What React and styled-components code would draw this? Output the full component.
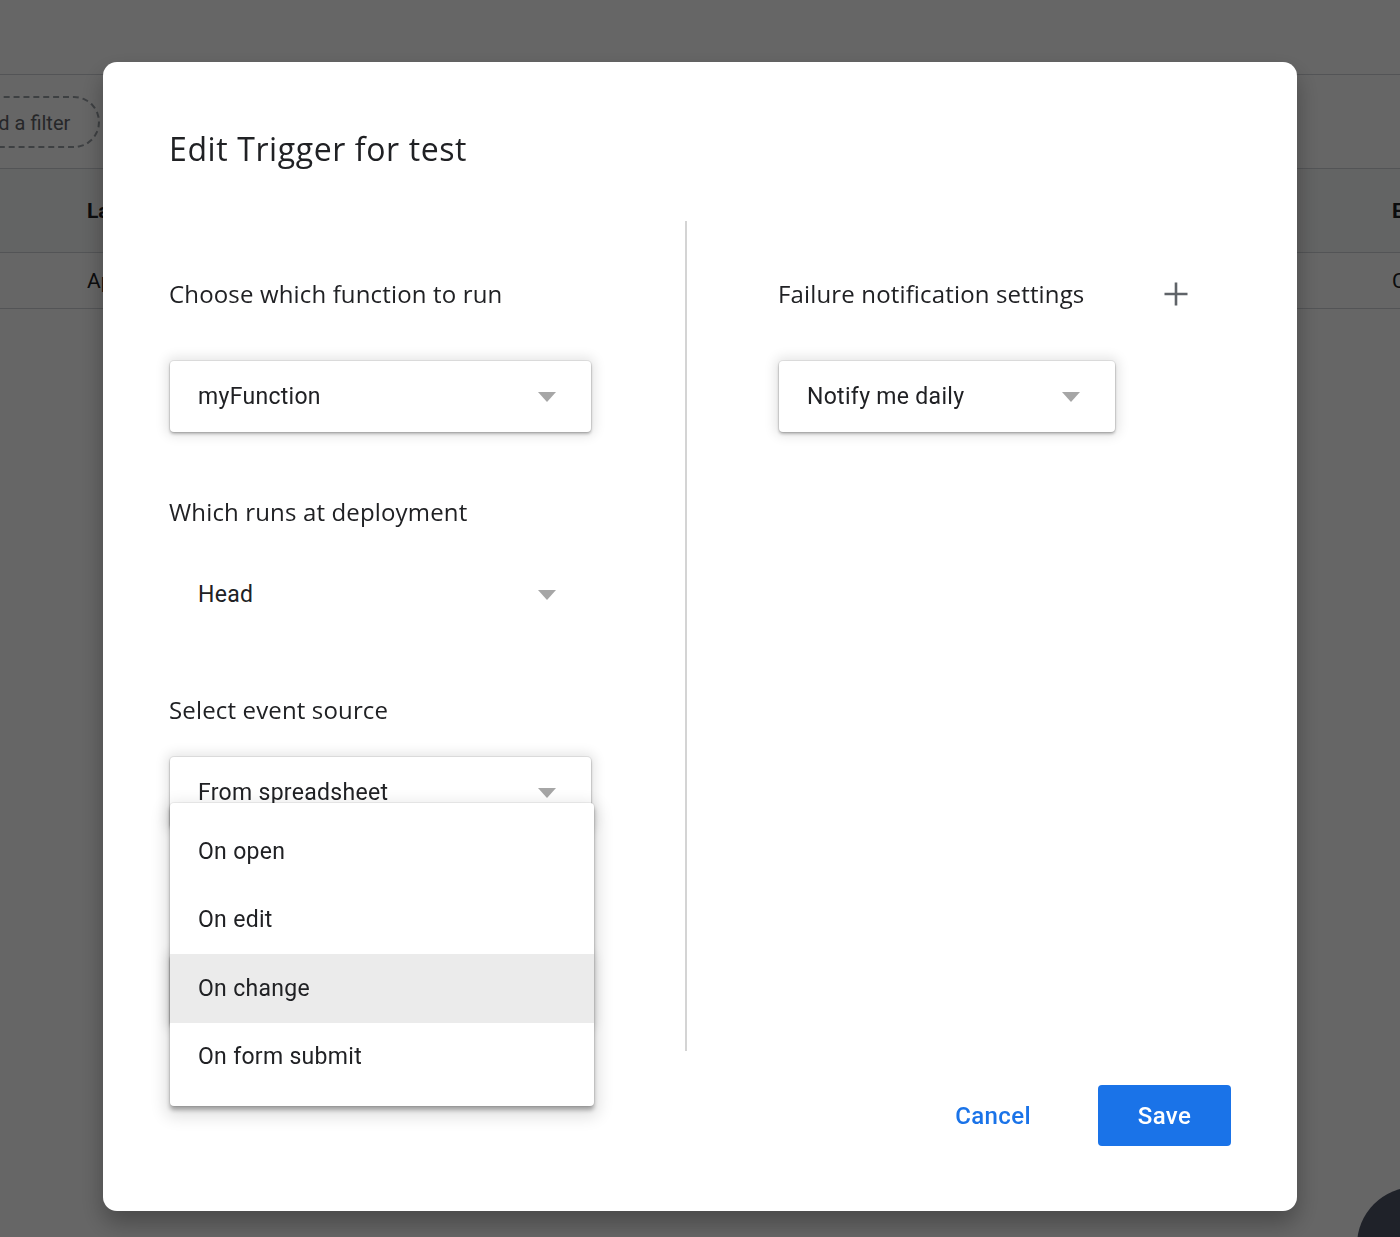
import React from "react";
import styled, { createGlobalStyle } from "styled-components";

const HEAD_FONT = `"Open Sans", Roboto, "Liberation Sans", sans-serif`;

const GlobalStyle = createGlobalStyle`
  html, body { margin: 0; padding: 0; }
  body {
    font-family: Roboto, "Liberation Sans", sans-serif;
    background: #fff;
    overflow: hidden;
  }
  * { box-sizing: border-box; }
`;

/* ===================== BACKGROUND PAGE ===================== */

const Page = styled.div`
  width: 1400px;
  height: 1237px;
  background: #fff;
  overflow: hidden;
`;

const TopBar = styled.div`
  height: 75px;
  border-bottom: 1px solid #d0d3d8;
`;

const FilterBar = styled.div`
  height: 94px;
  display: flex;
  align-items: center;
  border-bottom: 1px solid #d0d3d8;
`;

const FilterChip = styled.div`
  margin-left: -52px;
  height: 52px;
  padding: 2px 28px 0 24px;
  display: flex;
  align-items: center;
  border: 2px dashed #9aa0a6;
  border-radius: 26px;
  font-size: 20px;
  color: #5f6368;
  white-space: nowrap;
`;

const TableRow = styled.div`
  display: grid;
  grid-template-columns: 87px 1305px 200px;
  align-items: center;
  height: ${({ $h }) => $h}px;
  border-bottom: 1px solid #d0d3d8;
  background: ${({ $head }) => ($head ? "#f8f9fa" : "#fff")};
  font-size: 21px;
  font-weight: ${({ $head }) => ($head ? 700 : 400)};
  color: #202124;
  white-space: nowrap;
`;

const Fab = styled.div`
  position: fixed;
  left: 1357px;
  top: 1187px;
  width: 116px;
  height: 116px;
  border-radius: 50%;
  background: #4f5668;
`;

/* ===================== DIALOG ===================== */

const Scrim = styled.div`
  position: fixed;
  inset: 0;
  background: rgba(0, 0, 0, 0.6);
  display: flex;
  justify-content: center;
  align-items: flex-start;
  padding-top: 62px;
`;

const Dialog = styled.div`
  width: 1194px;
  height: 1149px;
  background: #fff;
  border-radius: 14px;
  padding: 67px 66px 65px;
  display: flex;
  flex-direction: column;
  box-shadow: 0 12px 24px rgba(0, 0, 0, 0.3);
`;

const Title = styled.h2`
  margin: 0;
  font-family: ${HEAD_FONT};
  font-weight: 500;
  font-size: 32px;
  line-height: 40px;
  letter-spacing: 0.6px;
  color: #202124;
`;

const Body = styled.div`
  margin-top: 52px;
  height: 830px;
  display: grid;
  grid-template-columns: 516px 2px 1fr;
`;

const Column = styled.div`
  padding-top: 57px;
  padding-left: ${({ $pl }) => $pl || 0}px;
  display: flex;
  flex-direction: column;
`;

const Divider = styled.div`
  background: #d4d4d4;
`;

const Section = styled.div`
  display: flex;
  flex-direction: column;

  & + & {
    margin-top: 64px;
  }
`;

const LabelRow = styled.div`
  width: 416px;
  height: 32px;
  display: flex;
  align-items: center;
  justify-content: space-between;
`;

const Label = styled.div`
  font-family: ${HEAD_FONT};
  font-size: 24px;
  line-height: 32px;
  letter-spacing: 0.15px;
  color: #202124;
`;

const IconButton = styled.button`
  width: 36px;
  height: 32px;
  padding: 0;
  border: none;
  background: none;
  display: flex;
  align-items: center;
  justify-content: center;
  cursor: pointer;
`;

const Field = styled.div`
  position: relative;
  margin-top: ${({ $gap }) => $gap}px;
  margin-left: 1px;
  width: ${({ $w }) => $w}px;
  height: 71px;
  padding: 0 35px 0 28px;
  display: flex;
  align-items: center;
  justify-content: space-between;
  background: #fff;
  border-radius: 4px;
  font-size: 23px;
  letter-spacing: 0.3px;
  color: #202124;
  box-shadow: ${({ $flat }) =>
    $flat
      ? "none"
      : "0 0 0 1px rgba(0,0,0,0.07), 0 2px 3px rgba(0,0,0,0.25), 0 0 12px 4px rgba(0,0,0,0.1)"};
`;

const Caret = styled.span`
  width: 0;
  height: 0;
  border-left: 9.5px solid transparent;
  border-right: 9.5px solid transparent;
  border-top: 10px solid #a6a6a6;
`;

const Menu = styled.ul`
  position: absolute;
  top: 46px;
  left: 0;
  width: 424px;
  margin: 0;
  padding: 14px 0 15px;
  list-style: none;
  background: #fff;
  border-radius: 4px;
  z-index: 2;
  letter-spacing: 0.3px;
  box-shadow: 0 0 0 1px rgba(0, 0, 0, 0.05), 0 4px 4px rgba(0, 0, 0, 0.3),
    0 6px 16px 5px rgba(0, 0, 0, 0.12);
`;

const MenuItem = styled.li`
  height: 68.5px;
  display: flex;
  align-items: center;
  padding-left: 28px;
  font-size: 23px;
  color: #202124;
  background: ${({ $active }) => ($active ? "#ebebeb" : "transparent")};
`;

const Footer = styled.div`
  margin-top: 34px;
  display: flex;
  justify-content: flex-end;
  gap: 43px;
`;

const TextButton = styled.button`
  min-width: 123px;
  width: ${({ $primary }) => ($primary ? "133px" : "auto")};
  height: 61px;
  padding: 0 24px;
  border: none;
  border-radius: 4px;
  background: ${({ $primary }) => ($primary ? "#1a73e8" : "transparent")};
  color: ${({ $primary }) => ($primary ? "#fff" : "#1a73e8")};
  font-family: Roboto, "Liberation Sans", sans-serif;
  font-size: 24px;
  font-weight: 500;
  letter-spacing: 0.4px;
  cursor: pointer;
`;

/* ===================== COMPONENT ===================== */

const eventTypes = ["On open", "On edit", "On change", "On form submit"];

function PlusIcon() {
  return (
    <svg width="24" height="24" viewBox="0 0 24 24">
      <path d="M12 0.5v23M0.5 12h23" stroke="#5f6368" strokeWidth="2.6" fill="none" />
    </svg>
  );
}

export default function App() {
  return (
    <>
      <GlobalStyle />
      <Page>
        <TopBar />
        <FilterBar>
          <FilterChip>Add a filter</FilterChip>
        </FilterBar>
        <TableRow $head $h={84}>
          <span />
          <span>Last run</span>
          <span>Error rate</span>
        </TableRow>
        <TableRow $h={56}>
          <span />
          <span>Apr 14, 2020</span>
          <span>Completed</span>
        </TableRow>
        <Fab />
      </Page>

      <Scrim>
        <Dialog>
          <Title>Edit Trigger for test</Title>

          <Body>
            {/* -------- LEFT -------- */}
            <Column>
              <Section>
                <Label>Choose which function to run</Label>
                <Field $gap={51} $w={421}>
                  myFunction
                  <Caret />
                </Field>
              </Section>

              <Section>
                <Label>Which runs at deployment</Label>
                <Field $gap={31} $w={421} $flat>
                  Head
                  <Caret />
                </Field>
              </Section>

              <Section>
                <Label>Select event source</Label>
                <Field $gap={31} $w={421}>
                  From spreadsheet
                  <Caret />
                  <Menu>
                    {eventTypes.map((t) => (
                      <MenuItem key={t} $active={t === "On change"}>
                        {t}
                      </MenuItem>
                    ))}
                  </Menu>
                </Field>
              </Section>

              <Section>
                <Label>Select event type</Label>
                <Field $gap={31} $w={421}>
                  On change
                  <Caret />
                </Field>
              </Section>
            </Column>

            <Divider />

            {/* -------- RIGHT -------- */}
            <Column $pl={91}>
              <Section>
                <LabelRow>
                  <Label>Failure notification settings</Label>
                  <IconButton aria-label="Add">
                    <PlusIcon />
                  </IconButton>
                </LabelRow>
                <Field $gap={51} $w={336}>
                  Notify me daily
                  <Caret />
                </Field>
              </Section>
            </Column>
          </Body>

          <Footer>
            <TextButton>Cancel</TextButton>
            <TextButton $primary>Save</TextButton>
          </Footer>
        </Dialog>
      </Scrim>
    </>
  );
}
